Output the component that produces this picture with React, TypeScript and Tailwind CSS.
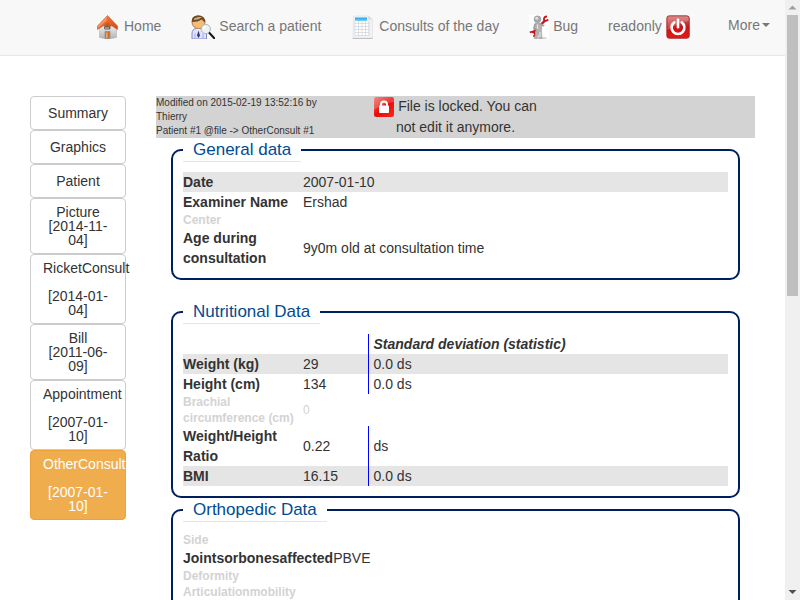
import type { ReactNode } from "react";

function HomeIcon() {
  return (
    <svg width="24" height="24" viewBox="0 0 24 24" aria-hidden="true">
      <defs>
        <linearGradient id="roof" x1="0" y1="0" x2="1" y2="1">
          <stop offset="0" stopColor="#f58a4c" />
          <stop offset="1" stopColor="#d8430c" />
        </linearGradient>
        <linearGradient id="wall" x1="0" y1="0" x2="0" y2="1">
          <stop offset="0" stopColor="#ffffff" />
          <stop offset="1" stopColor="#b5b5b5" />
        </linearGradient>
      </defs>
      <path d="M3.500 12 12 6l8.500 6v10.500Q12 25 3.500 22.500Z" fill="url(#wall)" stroke="#b5b5b5" strokeWidth=".6" />
      <path d="M11.500.5 1.500 11v3.500L11.500 8l10 6.500V11Z" fill="url(#roof)" stroke="#b5481c" strokeWidth=".5" />
      <path d="M11.500 1 2 11v2L10 6Z" fill="#fbc0a0" opacity=".5" />
      <path d="m11.500 7.500-4 3v1h8v-1Z" fill="#d9530f" />
      <rect x="8" y="11" width="6.500" height="3.500" rx="1.500" fill="#6b5c55" />
      <path d="M9 13h4" stroke="#d8c5b8" />
      <path d="M9 16.500h5v7.200H9Z" fill="#c9732f" stroke="#8f8f8f" strokeWidth=".8" />
      <path d="M10 17.500h1.500v5.500H10Z" fill="#eba568" />
    </svg>
  );
}

function SearchPatientIcon() {
  return (
    <svg width="24" height="24" viewBox="0 0 24 24" aria-hidden="true">
      <path d="M1 24v-5.500q0-4.500 4.500-5h5q5 .5 5 5.500v5Z" fill="#dfe3fb" stroke="#8289c9" />
      <path d="M4 18.500V24M12 18.500V24" stroke="#a5abe0" />
      <path d="m5 13.500 2.500 2 2.500-2-1.500-1.500H6.500Z" fill="#fff" />
      <path d="m7.500 15.500 1.500 5-1.500 2.500L6 20.500Z" fill="#35398c" />
      <circle cx="7.500" cy="7.200" r="6.500" fill="#f5bb7c" stroke="#99601f" strokeWidth=".7" />
      <path d="M.8 7Q0 .5 7 .4 14.500.5 14.200 7.500 12 6.500 11 4.500 7 7 .8 7Z" fill="#6e4b22" />
      <path d="M3 3.800Q6 1.200 11 2.200 8 4.800 3 5Z" fill="#cbb28b" />
      <path d="m18 17.500 5.500 6" stroke="#151515" strokeWidth="2" strokeLinecap="round" />
      <circle cx="14.800" cy="14" r="4.600" fill="#edf3f3" stroke="#b0b3b3" />
      <path d="M12.500 14q0-2.500 2.500-2.700" stroke="#fff" strokeWidth="1.300" fill="none" />
    </svg>
  );
}

function CalendarIcon() {
  return (
    <svg width="24" height="24" viewBox="0 0 24 24" aria-hidden="true">
      <path d="M2.500 1h15.500l3.500 3.500V23H2Z" fill="#f1f2f4" stroke="#dedede" strokeWidth=".6" />
      <path d="M1.500 23.500h20" stroke="#b5b5b5" strokeWidth=".8" />
      <path d="M17 1v3.500h4.500Z" fill="#dadada" />
      <path d="M4 6h13v15H4Z" fill="#fff" />
      <path d="M4 2.500h12v3.500H4Z" fill="#34aef0" />
      <path d="M4 4.500h12V6H4Z" fill="#75cdf8" />
      <path d="M4 8.500h14M4 11.500h14M4 14.500h14M4 17.500h14M4 20.500h14M4 6v14.500M7.500 6v14.500M11 6v14.500M14.500 6v14.500M18 6v14.500" stroke="#cdd2d8" strokeWidth=".7" />
    </svg>
  );
}

function BugIcon() {
  return (
    <svg width="20" height="24" viewBox="0 0 20 24" aria-hidden="true">
      <path d="M0 0h20v24H0Z" fill="#fff" />
      <ellipse cx="11" cy="23" rx="7" ry="1" fill="#cfcfcf" />
      <path d="m3.500 18 13-13" stroke="#c4161c" strokeWidth="2.400" />
      <path d="M18 1.500q-3.500 0-3 3.500 1.500 2 4.200-.5M.8 17.500q4-2 5 .5t-1.500 3.500" fill="none" stroke="#c4161c" strokeWidth="1.800" />
      <path d="M6 8.500q3-1.500 5.500 0l1.500 3-.5 4.500.5 7.500h-3l-.5-6-1.500 6H5.500L7 15Z" fill="#b3b3b3" stroke="#919191" strokeWidth=".4" />
      <path d="M8.500 9.500v6M11 17v5" stroke="#e3e3e3" strokeWidth="1.200" />
      <circle cx="8.500" cy="4.300" r="3.500" fill="#a8a8a8" stroke="#8f8f8f" strokeWidth=".4" />
      <circle cx="7.800" cy="3.200" r="1.500" fill="#e0e0e0" />
      <path d="m6 9.500-1 4 3 1.500M11.500 9l3 1.500" stroke="#a0a0a0" strokeWidth="1.800" fill="none" strokeLinecap="round" />
    </svg>
  );
}

function PowerIcon() {
  return (
    <svg width="24" height="24" viewBox="0 0 24 24" aria-hidden="true">
      <defs>
        <linearGradient id="power" x1="0" y1="0" x2="0" y2="1">
          <stop offset="0" stopColor="#c97070" />
          <stop offset=".5" stopColor="#c81418" />
          <stop offset="1" stopColor="#e51a14" />
        </linearGradient>
      </defs>
      <rect x=".8" y=".8" width="22.500" height="22.500" rx="2.500" fill="url(#power)" stroke="#a52022" strokeWidth=".8" />
      <path d="M1.500 3q0-1.500 1.500-1.500h18q1.500 0 1.500 1.500v3Q14 7 1.500 15Z" fill="#fff" opacity=".22" />
      <path d="M8.300 7.400a6.400 6.400 0 1 0 7.400 0" fill="none" stroke="#fff" strokeWidth="2.600" strokeLinecap="round" />
      <path d="M12 4.800v7.500" stroke="#fff" strokeWidth="2.600" strokeLinecap="round" />
    </svg>
  );
}

function LockIcon() {
  return (
    <svg className="inline-block align-middle" width="20" height="20" viewBox="0 0 20 20" aria-hidden="true">
      <defs>
        <linearGradient id="lock" x1="0" y1="0" x2="1" y2="1">
          <stop offset="0" stopColor="#f26a60" />
          <stop offset=".5" stopColor="#e80a08" />
          <stop offset="1" stopColor="#fa2a18" />
        </linearGradient>
      </defs>
      <rect width="20" height="20" rx="2.500" fill="url(#lock)" />
      <path d="M0 2.500Q0 0 2.500 0h15Q20 0 20 2.500V5Q10 6 0 13Z" fill="#fff" opacity=".2" />
      <path d="M7 9V7.500a3 3 0 0 1 6 0V9" fill="none" stroke="#fff" strokeWidth="2" />
      <rect x="5" y="8.500" width="10" height="7.500" rx=".8" fill="#fff" />
    </svg>
  );
}

function NavLink({ children }: { children: ReactNode }) {
  return (
    <a href="#" className="flex items-start gap-1 px-[15px] pt-[15px] leading-[22px]">
      {children}
    </a>
  );
}

function Navbar() {
  return (
    <nav className="flex h-14 items-start justify-between border-b border-[#e7e7e7] bg-[#f8f8f8] pl-[81px] whitespace-nowrap text-[#777]">
      <div className="flex">
        <NavLink><HomeIcon />Home</NavLink>
        <NavLink><SearchPatientIcon />Search a patient</NavLink>
        <NavLink><CalendarIcon />Consults of the day</NavLink>
        <NavLink><BugIcon />Bug</NavLink>
        <NavLink>readonly<PowerIcon /></NavLink>
      </div>
      <button type="button" className="flex items-center gap-[2px] px-[15px] pt-[15px] leading-5">
        More
        <span className="border-x-4 border-t-4 border-x-transparent border-t-[#777]" />
      </button>
    </nav>
  );
}

type Tab = { name: string; date?: string; long?: boolean; active?: boolean };

const tabs: Tab[] = [
  { name: "Summary" },
  { name: "Graphics" },
  { name: "Patient" },
  { name: "Picture", date: "[2014-11-04]" },
  { name: "RicketConsult", date: "[2014-01-04]", long: true },
  { name: "Bill", date: "[2011-06-09]" },
  { name: "Appointment", date: "[2007-01-10]", long: true },
  { name: "OtherConsult", date: "[2007-01-10]", long: true, active: true },
];

function Sidebar() {
  return (
    <aside className="flex w-24 shrink-0 flex-col">
      {tabs.map((tab) => (
        <button
          key={tab.name}
          type="button"
          className={`rounded border px-3 py-[6px] text-center ${tab.date ? "leading-[14px]" : "leading-5"} ${
            tab.active ? "border-[#eea236] bg-[#f0ad4e] text-white" : "border-[#ccc] bg-white"
          }`}
        >
          <span className={`block ${tab.long ? "mb-[14px]" : ""}`}>{tab.name}</span>
          {tab.date && <span className="block">{tab.date}</span>}
        </button>
      ))}
    </aside>
  );
}

function Panel({ title, children }: { title: string; children: ReactNode }) {
  return (
    <fieldset className="rounded-[10px] border-2 border-[#001f60] p-[10px]">
      <legend className="border-b border-[#e5e5e5] px-[10px] text-[17px] leading-[23px] text-[#004b91]">{title}</legend>
      <table className="w-full border-collapse">{children}</table>
    </fieldset>
  );
}

type RowProps = { label: string; value?: string; sd?: string; shaded?: boolean; empty?: boolean };

function Row({ label, value, sd, shaded, empty }: RowProps) {
  return (
    <tr className={`${shaded ? "bg-[#e5e5e5]" : ""} ${empty ? "text-xs leading-4 text-[#d3d3d3]" : ""}`}>
      <th scope="row" className="w-[120px] text-left font-bold">{label}</th>
      <td className={sd ? "w-[65px]" : ""}>{value}</td>
      {sd && <td className="border-l border-[#0000ff] pl-[5px]">{sd}</td>}
    </tr>
  );
}

function Scrollbar() {
  return (
    <div className="flex w-[15px] shrink-0 flex-col items-center justify-between bg-[#f0f0f0]" aria-hidden="true">
      <div className="flex w-full flex-1 flex-col items-center">
        <svg width="15" height="15" viewBox="0 0 15 15"><path d="m7.500 5.500 4 4h-8Z" fill="#a0a0a0" /></svg>
        <div className="h-[48%] w-[11px] bg-[#bfbfbf]" />
      </div>
      <svg width="15" height="15" viewBox="0 0 15 15"><path d="M3.500 5h8l-4 4Z" fill="#505050" /></svg>
    </div>
  );
}

export default function App() {
  return (
    <div className="flex h-screen overflow-hidden bg-white font-['Liberation_Sans',Arial,sans-serif] text-sm leading-5 text-[#333]">
      <div className="min-w-0 flex-1 overflow-hidden">
        <Navbar />
        <div className="flex items-start gap-[30px] px-[30px] pt-10">
          <Sidebar />
          <main className="min-w-0 flex-1">
            <header className="grid grid-cols-3 bg-[#d3d3d3]">
              <div className="pr-[15px] text-[10px] leading-[14px]">
                <p>Modified on 2015-02-19 13:52:16 by Thierry</p>
                <p>Patient #1 @file -&gt; OtherConsult #1</p>
              </div>
              <p className="px-[15px] text-center leading-[21px]">
                <LockIcon /> File is locked. You can not edit it anymore.
              </p>
            </header>
            <div className="px-[15px]">
              <Panel title="General data">
                <tbody>
                  <Row label="Date" value="2007-01-10" shaded />
                  <Row label="Examiner Name" value="Ershad" />
                  <Row label="Center" empty />
                  <Row label="Age during consultation" value="9y0m old at consultation time" />
                </tbody>
              </Panel>
              <div className="mt-5">
                <Panel title="Nutritional Data">
                  <thead>
                    <tr>
                      <td colSpan={2} />
                      <th scope="col" className="border-l border-[#0000ff] pl-[5px] text-left font-bold italic">
                        Standard deviation (statistic)
                      </th>
                    </tr>
                  </thead>
                  <tbody>
                    <Row label="Weight (kg)" value="29" sd="0.0 ds" shaded />
                    <Row label="Height (cm)" value="134" sd="0.0 ds" />
                    <Row label="Brachial circumference (cm)" value="0" empty />
                    <Row label="Weight/Height Ratio" value="0.22" sd="ds" />
                    <Row label="BMI" value="16.15" sd="0.0 ds" shaded />
                  </tbody>
                </Panel>
              </div>
              <Panel title="Orthopedic Data">
                <tbody>
                  <Row label="Side" empty />
                  <Row label="Jointsorbonesaffected" value="PBVE" />
                  <Row label="Deformity" empty />
                  <Row label="Articulationmobility" empty />
                </tbody>
              </Panel>
            </div>
          </main>
        </div>
      </div>
      <Scrollbar />
    </div>
  );
}
